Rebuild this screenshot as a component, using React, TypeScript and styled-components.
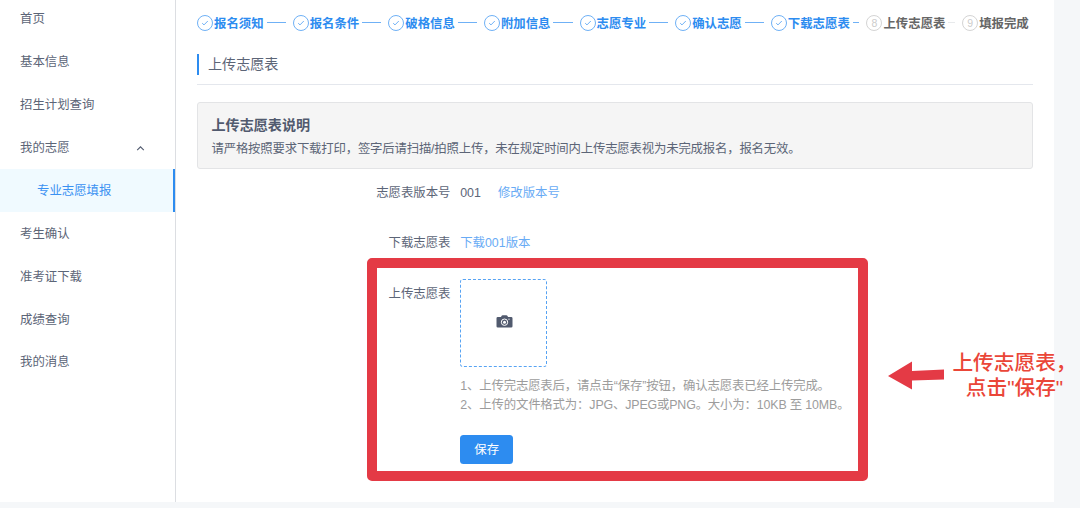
import React from 'react';
import styled, { createGlobalStyle } from 'styled-components';

const GlobalStyle = createGlobalStyle`
  * { box-sizing: border-box; }
  body {
    margin: 0;
    background: #f5f7f9;
    color: #5c6577;
    font-family: "Liberation Sans", "Noto Sans CJK SC", sans-serif;
    font-size: 12.4px;
    font-weight: 400;
    line-height: 18.6px;
    overflow: hidden;
  }
`;

const Page = styled.div`
  position: relative;
  display: flex;
  width: 1054px;
  height: 502px;
  background: #fff;
`;

const Sidebar = styled.nav`
  display: flex;
  flex-direction: column;
  flex: none;
  width: 176px;
  border-right: 1px solid #dcdee2;
  overflow: hidden;
`;

const MenuItem = styled.a<{ $active?: boolean; $nested?: boolean; $first?: boolean }>`
  display: flex;
  align-items: center;
  justify-content: space-between;
  flex: none;
  height: 42.9px;
  margin-top: ${(p) => (p.$first ? '-2.8px' : '0')};
  padding: 2px 30px 0 ${(p) => (p.$nested ? '37px' : '20px')};
  color: ${(p) => (p.$active ? '#3a91f2' : '#5c6577')};
  background: ${(p) => (p.$active ? '#f0faff' : 'transparent')};
  border-right: ${(p) => (p.$active ? '2px solid #2d8cf0' : 'none')};
`;

const Main = styled.main`
  flex: 1;
  min-width: 0;
  padding: 13px 21px 0;
`;

const Steps = styled.div`
  display: flex;
  height: 20px;
`;

const StepItem = styled.div<{ $done: boolean }>`
  display: flex;
  align-items: center;
  flex: none;
  width: 95.65px;
  white-space: nowrap;
  font-weight: 700;
  color: ${(p) => (p.$done ? '#2d8cf0' : '#666')};
`;

const StepMark = styled.span<{ $done: boolean }>`
  display: flex;
  align-items: center;
  justify-content: center;
  flex: none;
  width: 16px;
  height: 16px;
  margin-right: 1px;
  border: 1px solid ${(p) => (p.$done ? '#6fb1f6' : '#d4d4d4')};
  border-radius: 50%;
  font-size: 10.5px;
  font-weight: 400;
  color: #ccc;
`;

const StepTitle = styled.span`
  padding-top: 2.5px;
`;

const StepLine = styled.span<{ $done: boolean }>`
  flex: 1;
  height: 1px;
  margin: 0 7px 1px 3px;
  background: ${(p) => (p.$done ? '#6fb1f6' : '#e8eaec')};
`;

const Heading = styled.header`
  display: flex;
  align-items: center;
  width: 836px;
  height: 42px;
  margin-top: 10px;
  padding-top: 2px;
  border-bottom: 1px solid #e4e7ed;
`;

const HeadingText = styled.h1`
  height: 21px;
  margin: 0;
  padding-left: 9px;
  border-left: 2px solid #2d8cf0;
  font-size: 14.1px;
  font-weight: 400;
  line-height: 21px;
`;

const Notice = styled.section`
  width: 836px;
  height: 67px;
  margin-top: 17px;
  padding: 12px 13.5px;
  background: #f5f5f5;
  border: 1px solid #e3e4e6;
  border-radius: 3px;
`;

const NoticeTitle = styled.h2`
  margin: 0;
  color: #515a6e;
  font-size: 14.1px;
  font-weight: 700;
  line-height: 20px;
`;

const NoticeText = styled.p`
  margin: 4.5px 0 0;
  letter-spacing: -0.19px;
`;

const Form = styled.div`
  padding-top: 15px;
`;

const Field = styled.div<{ $gap?: number }>`
  display: flex;
  align-items: flex-start;
  margin-bottom: ${(p) => p.$gap ?? 0}px;
`;

const Label = styled.label`
  flex: none;
  width: 253.5px;
  margin-right: 9.7px;
  text-align: right;
`;

const Link = styled.a`
  color: #68abf5;
`;

const Version = styled.span`
  margin-right: 17px;
`;

const UploadBox = styled.div`
  display: flex;
  align-items: center;
  justify-content: center;
  width: 87px;
  height: 88px;
  margin-top: -5.8px;
  padding: 0 0 4px 1px;
  border: 1px dashed #57a3f3;
  border-radius: 3px;
`;

const Hints = styled.div`
  margin-top: 10px;
  color: #9c9c9c;
  white-space: nowrap;
  letter-spacing: -0.15px;
`;

const SaveButton = styled.button`
  display: block;
  width: 53px;
  height: 29px;
  margin-top: 21px;
  padding: 1px 0 0;
  border: none;
  border-radius: 3.5px;
  background: #2d8cf0;
  color: #fff;
  font: inherit;
`;

const Highlight = styled.div`
  position: absolute;
  left: 367px;
  top: 257.5px;
  width: 501px;
  height: 223.5px;
  border: 10px solid #e43a45;
  border-radius: 5px;
`;

const Pointer = styled.svg`
  position: absolute;
  left: 887px;
  top: 360px;
`;

const Callout = styled.div`
  position: absolute;
  left: 952px;
  top: 351px;
  width: 125px;
  color: #ea4638;
  font-size: 20.7px;
  font-weight: 500;
  line-height: 24.7px;
  text-align: center;
  white-space: nowrap;
`;

type Entry = { text: string; active?: boolean; open?: boolean };

const menu: Entry[] = [
  { text: '首页' },
  { text: '基本信息' },
  { text: '招生计划查询' },
  { text: '我的志愿', open: true },
  { text: '专业志愿填报', active: true },
  { text: '考生确认' },
  { text: '准考证下载' },
  { text: '成绩查询' },
  { text: '我的消息' },
];

const steps = ['报名须知', '报名条件', '破格信息', '附加信息', '志愿专业', '确认志愿', '下载志愿表', '上传志愿表', '填报完成'];
const finished = 7;

const Chevron = () => (
  <svg width="9" height="9" viewBox="0 0 9 9" fill="none" stroke="#515a6e" strokeWidth="1.1">
    <path d="M1.2 6.2 4.5 2.9 7.8 6.2" />
  </svg>
);

const Tick = () => (
  <svg width="8" height="8" viewBox="0 0 8 8" fill="none" stroke="#6fb1f6" strokeWidth="1">
    <path d="M1.2 4.2 3 5.9 6.8 2" />
  </svg>
);

const Camera = () => (
  <svg width="17" height="13" viewBox="0 0 17 13">
    <path
      fill="#515a6e"
      d="M1.8 2h3.1l1-1.4Q6.3.2 6.8.2h3.4q.5 0 .9.4l1 1.4h3.1q1.3 0 1.3 1.3v7.9q0 1.3-1.3 1.3H1.8Q.5 12.5.5 11.2V3.3Q.5 2 1.8 2Z"
    />
    <circle cx="8.5" cy="7.2" r="3.2" fill="none" stroke="#fff" strokeWidth="1" />
    <circle cx="8.5" cy="7.2" r="1.5" fill="#fff" />
    <circle cx="13" cy="4.2" r="0.6" fill="#fff" />
  </svg>
);

export default function App() {
  return (
    <>
      <GlobalStyle />
      <Page>
        <Sidebar>
          {menu.map((m, i) => (
            <MenuItem key={m.text} $first={i === 0} $active={m.active} $nested={m.active}>
              {m.text}
              {m.open && <Chevron />}
            </MenuItem>
          ))}
        </Sidebar>
        <Main>
          <Steps>
            {steps.map((s, i) => {
              const done = i < finished;
              return (
                <StepItem key={s} $done={done}>
                  <StepMark $done={done}>{done ? <Tick /> : i + 1}</StepMark>
                  <StepTitle>{s}</StepTitle>
                  {i < steps.length - 1 && <StepLine $done={done} />}
                </StepItem>
              );
            })}
          </Steps>
          <Heading>
            <HeadingText>上传志愿表</HeadingText>
          </Heading>
          <Notice>
            <NoticeTitle>上传志愿表说明</NoticeTitle>
            <NoticeText>请严格按照要求下载打印，签字后请扫描/拍照上传，未在规定时间内上传志愿表视为未完成报名，报名无效。</NoticeText>
          </Notice>
          <Form>
            <Field $gap={31.7}>
              <Label>志愿表版本号</Label>
              <Version>001</Version>
              <Link>修改版本号</Link>
            </Field>
            <Field $gap={32}>
              <Label>下载志愿表</Label>
              <Link>下载001版本</Link>
            </Field>
            <Field>
              <Label>上传志愿表</Label>
              <div>
                <UploadBox>
                  <Camera />
                </UploadBox>
                <Hints>
                  <div>1、上传完志愿表后，请点击“保存”按钮，确认志愿表已经上传完成。</div>
                  <div>2、上传的文件格式为：JPG、JPEG或PNG。大小为：10KB 至 10MB。</div>
                </Hints>
                <SaveButton>保存</SaveButton>
              </div>
            </Field>
          </Form>
        </Main>
        <Highlight />
        <Pointer width="58" height="31" viewBox="0 0 58 31">
          <path fill="#e43a45" d="M1 16 25 1.5V11L57 9.5V19.5L25 20.5V29.5Z" />
        </Pointer>
        <Callout>
          上传志愿表，
          <br />
          点击"保存"
        </Callout>
      </Page>
    </>
  );
}
